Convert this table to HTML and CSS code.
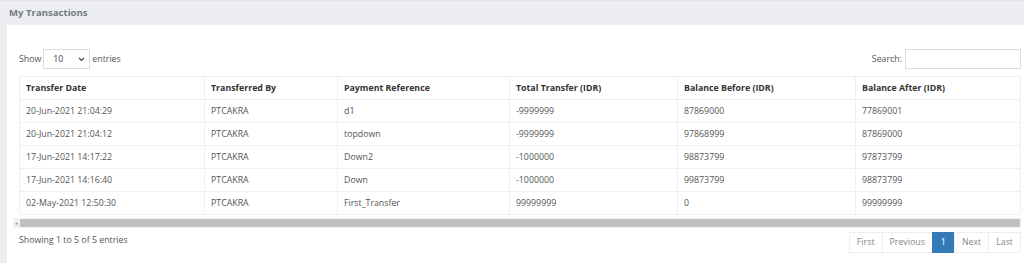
FILE: index.html
```html
<!DOCTYPE html>
<html>
<head>
<meta charset="utf-8">
<link rel="stylesheet" href="styles.css">
</head>
<body>
<div class="title-bar">My Transactions</div>
<div class="card">
  <div class="controls">
    <div class="length">Show <span class="select">10<svg class="chev" width="7" height="5" viewBox="0 0 7 5"><path d="M1 1 L3.5 3.5 L6 1" fill="none" stroke="#444" stroke-width="1.2"/></svg></span> entries</div>
    <div class="search">Search: <span class="input"></span></div>
  </div>
  <table class="tbl">
    <thead>
      <tr><th class="c1">Transfer Date</th><th class="c2">Transferred By</th><th class="c3">Payment Reference</th><th class="c4">Total Transfer (IDR)</th><th class="c5">Balance Before (IDR)</th><th class="c6">Balance After (IDR)</th></tr>
    </thead>
    <tbody>
      <tr><td>20-Jun-2021 21:04:29</td><td>PTCAKRA</td><td>d1</td><td>-9999999</td><td>87869000</td><td>77869001</td></tr>
      <tr><td>20-Jun-2021 21:04:12</td><td>PTCAKRA</td><td>topdown</td><td>-9999999</td><td>97868999</td><td>87869000</td></tr>
      <tr><td>17-Jun-2021 14:17:22</td><td>PTCAKRA</td><td>Down2</td><td>-1000000</td><td>98873799</td><td>97873799</td></tr>
      <tr><td>17-Jun-2021 14:16:40</td><td>PTCAKRA</td><td>Down</td><td>-1000000</td><td>99873799</td><td>98873799</td></tr>
      <tr><td>02-May-2021 12:50:30</td><td>PTCAKRA</td><td>First_Transfer</td><td>99999999</td><td>0</td><td>99999999</td></tr>
    </tbody>
  </table>
  <div class="scrollbar"><span class="arrow">&#9666;</span><span class="thumb"></span></div>
  <div class="footer">
    <div class="info">Showing 1 to 5 of 5 entries</div>
    <div class="pager"><span class="pg">First</span><span class="pg">Previous</span><span class="pg active">1</span><span class="pg">Next</span><span class="pg">Last</span></div>
  </div>
</div>
</body>
</html>
```
FILE: styles.css
```css
html, body { margin: 0; padding: 0; }
body {
  background: #eceef1;
  font-family: "Open Sans", "Noto Sans", sans-serif;
  font-size: 8.8px;
  color: #555;
  width: 1024px;
  height: 263px;
  overflow: hidden;
}
.title-bar {
  height: 25px;
  box-sizing: border-box;
  border-top: 1px solid #e3e5e8;
  padding-left: 9px;
  line-height: 23px;
  font-size: 9.6px;
  font-weight: 700;
  color: #727a82;
}
.card {
  margin-left: 7px;
  background: #fff;
  padding: 24px 3px 20px 12px;
}
.controls {
  display: flex;
  justify-content: space-between;
  align-items: center;
  height: 20px;
  margin-bottom: 7px;
}
.length, .search { display: flex; align-items: center; gap: 3px; color: #555; }
.length { gap: 2px; }
.select {
  display: inline-flex;
  align-items: center;
  justify-content: space-between;
  box-sizing: border-box;
  width: 47px;
  height: 20px;
  border: 1px solid #ddd;
  padding: 0 4px 0 9px;
  color: #444;
}
.chev { margin-left: 10px; }
.input {
  display: inline-block;
  box-sizing: border-box;
  width: 116px;
  height: 20px;
  border: 1px solid #ddd;
}
.tbl {
  width: 1002px;
  border-collapse: collapse;
  table-layout: fixed;
}
.tbl th, .tbl td {
  box-sizing: border-box;
  border: 1px solid #f0f0f0;
  text-align: left;
  padding: 0 6px;
  height: 23px;
  white-space: nowrap;
}
.tbl th { font-weight: 700; color: #333; }
.tbl td { color: #555; }
.c1 { width: 185px; }
.c2 { width: 133px; }
.c3 { width: 172px; }
.c4 { width: 168px; }
.c5 { width: 178px; }
.scrollbar {
  display: flex;
  align-items: center;
  height: 10px;
  margin: 3px 0 0 -6px;
  width: 1008px;
  background: #f1f1f1;
}
.arrow { font-size: 5px; color: #999; width: 7px; text-align: center; }
.thumb { flex: 1; height: 8px; background: #c1c1c1; margin-right: 1px; }
.footer {
  display: flex;
  justify-content: space-between;
  align-items: flex-start;
  margin-top: 4px;
}
.info { color: #555; margin-top: 2px; }
.pager { display: flex; }
.pg {
  box-sizing: border-box;
  height: 21px;
  line-height: 19px;
  padding: 0 7px;
  border: 1px solid #eee;
  margin-left: -1px;
  color: #888;
}
.pg.active { background: #337ab7; border-color: #337ab7; color: #fff; padding: 0 8px; }
```
